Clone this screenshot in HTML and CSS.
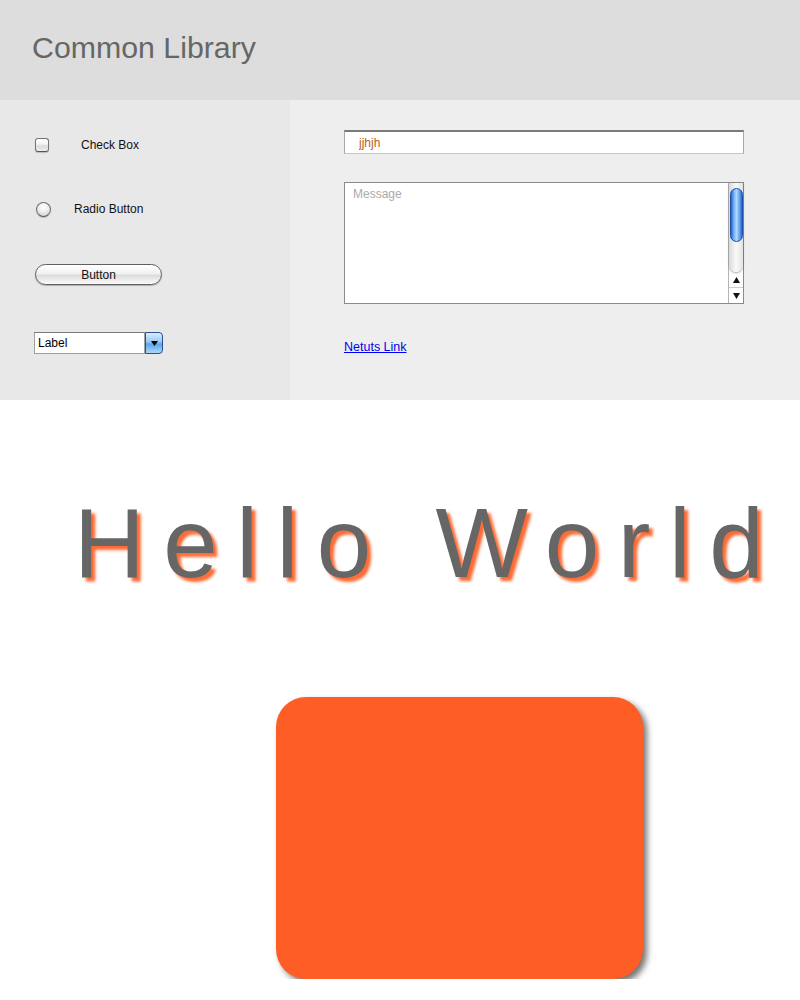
FILE: index.html
```html
<!DOCTYPE html>
<html lang="en">
<head>
<meta charset="utf-8">
<title>Common Library</title>
<link rel="stylesheet" href="styles.css">
</head>
<body>
<header class="header">
  <h1 class="title">Common Library</h1>
</header>
<section class="controls">
  <div class="col-left">
    <div class="row row-check"><span class="checkbox"></span><span class="lbl">Check Box</span></div>
    <div class="row row-radio"><span class="radio"></span><span class="lbl">Radio Button</span></div>
    <div class="row row-button"><button class="pill" type="button">Button</button></div>
    <div class="row row-select">
      <div class="select">
        <span class="select-field">Label</span>
        <span class="select-btn"><svg width="7" height="5" viewBox="0 0 7 5"><path d="M0 0H7L3.5 5Z" fill="#000"/></svg></span>
      </div>
    </div>
  </div>
  <div class="col-right">
    <input class="text-input" type="text" value="jjhjh">
    <div class="textarea-box">
      <textarea class="ta" placeholder="Message"></textarea>
      <div class="scrollbar">
        <div class="track"><div class="thumb"></div></div>
        <div class="arrow"><svg width="7" height="6" viewBox="0 0 7 6"><path d="M3.5 0L7 6H0Z" fill="#111"/></svg></div>
        <div class="arrow arrow-down"><svg width="7" height="6" viewBox="0 0 7 6"><path d="M0 0H7L3.5 6Z" fill="#111"/></svg></div>
      </div>
    </div>
    <a class="link" href="#">Netuts Link</a>
  </div>
</section>
<section class="hello">
  <p class="hello-text">Hello World</p>
</section>
<section class="box-wrap">
  <div class="orange-box"></div>
</section>
</body>
</html>
```
FILE: styles.css
```css
body {
  margin: 0;
  font-family: "Liberation Sans", Arial, sans-serif;
  background: #fff;
}

.header {
  height: 100px;
  box-sizing: border-box;
  background: #dddddd;
  padding: 31px 0 0 32px;
}

.title {
  margin: 0;
  font-weight: normal;
  font-size: 30.3px;
  line-height: 34px;
  color: #666;
}

.controls {
  display: flex;
  height: 300px;
}

.col-left {
  width: 290px;
  box-sizing: border-box;
  background: #e8e8e8;
  padding: 35px 0 0 34px;
  display: flex;
  flex-direction: column;
  align-items: flex-start;
}

.col-right {
  flex: 1;
  box-sizing: border-box;
  background: #eeeeee;
  padding: 30px 0 0 54px;
  display: flex;
  flex-direction: column;
  align-items: flex-start;
}

.row {
  display: flex;
  align-items: center;
  height: 20px;
}

.row-check { gap: 32px; padding-left: 1px; }
.row-radio { margin-top: 44px; gap: 23px; padding-left: 2px; }
.row-button { margin-top: 45px; height: 21px; padding-left: 1px; }
.row-select { margin-top: 47px; height: 22px; }

.lbl {
  font-size: 12px;
  line-height: 14px;
  color: #111;
}

.checkbox {
  width: 14px;
  height: 14px;
  box-sizing: border-box;
  border: 1px solid #757575;
  border-bottom-color: #555;
  border-radius: 3px;
  background: linear-gradient(#ffffff, #f4f4f4 40%, #dcdcdc 60%, #eeeeee);
  box-shadow: 0 1px 1px rgba(0, 0, 0, 0.2);
}

.radio {
  width: 15px;
  height: 15px;
  box-sizing: border-box;
  border: 1px solid #707070;
  border-bottom-color: #555;
  border-radius: 50%;
  background: radial-gradient(circle at 50% 30%, #ffffff 0%, #f0f0f0 40%, #c8c8c8 100%);
  box-shadow: 0 1px 1px rgba(0, 0, 0, 0.2);
}

.pill {
  width: 127px;
  height: 21px;
  box-sizing: border-box;
  border: 1px solid #5f5f5f;
  border-radius: 11px;
  padding: 0;
  background: linear-gradient(#ffffff 0%, #f1f1f1 45%, #dddddd 55%, #fafafa 100%);
  box-shadow: 0 1px 1px rgba(0, 0, 0, 0.25);
  font: 12px "Liberation Sans", Arial, sans-serif;
  color: #111;
}

.select {
  display: flex;
  width: 129px;
  height: 22px;
}

.select-field {
  width: 111px;
  box-sizing: border-box;
  border: 1px solid #a0a0a0;
  border-top-color: #7a7a7a;
  background: #fff;
  font-size: 12px;
  line-height: 20px;
  padding-left: 3px;
  color: #000;
}

.select-btn {
  width: 18px;
  box-sizing: border-box;
  border: 1px solid #2f4e8a;
  border-radius: 0 4px 4px 0;
  background: linear-gradient(#d9eeff, #94c8f6 45%, #5ba3ea 55%, #a9d8ff);
  display: flex;
  align-items: center;
  justify-content: center;
}

.text-input {
  width: 400px;
  height: 24px;
  box-sizing: border-box;
  margin: 0;
  border: 1px solid #c8c8c8;
  border-top: 2px solid #7a7a7a;
  border-left-color: #a8a8a8;
  border-right-color: #a8a8a8;
  background: #fff;
  padding: 0 0 0 14px;
  font: 12px "Liberation Sans", Arial, sans-serif;
  color: #b8601a;
  outline: none;
}

.textarea-box {
  margin-top: 28px;
  width: 400px;
  height: 122px;
  box-sizing: border-box;
  border: 1px solid #8a8a8a;
  background: #fff;
  display: flex;
}

.ta {
  flex: 1;
  margin: 0;
  border: 0;
  resize: none;
  padding: 4px 8px;
  font: 12px/14px "Liberation Sans", Arial, sans-serif;
  outline: none;
  background: transparent;
  overflow: hidden;
}

.ta::placeholder {
  color: #aaa;
}

.scrollbar {
  width: 15px;
  box-sizing: border-box;
  border-left: 1px solid #b5b5b5;
  display: flex;
  flex-direction: column;
  background: #fff;
}

.track {
  flex: 1;
  border-radius: 0 0 7px 7px;
  background: linear-gradient(90deg, #d8d8d8, #fafafa 50%, #e2e2e2);
  box-shadow: 0 1px 2px rgba(0, 0, 0, 0.35);
  padding-top: 5px;
  display: flex;
  justify-content: center;
  align-items: flex-start;
}

.thumb {
  width: 13px;
  height: 54px;
  box-sizing: border-box;
  border: 1px solid #1b4fa8;
  border-radius: 7px;
  background: linear-gradient(90deg, #2a62c8, #7db8ff 30%, #b0d8ff 50%, #5b9ef0 80%, #2a62c8);
}

.arrow {
  height: 15px;
  display: flex;
  align-items: center;
  justify-content: center;
}

.arrow-down {
  border-top: 1px solid #cfcfcf;
}

.link {
  margin-top: 36px;
  font-size: 12.5px;
  line-height: 14px;
  color: #0000ee;
  text-decoration: underline;
}

.hello {
  padding: 88px 0 0 74px;
}

.hello-text {
  margin: 0;
  font-size: 98px;
  line-height: 110px;
  letter-spacing: 18.5px;
  color: #666;
  text-shadow: 4px 4px 3px #ff6a33;
  white-space: nowrap;
}

.box-wrap {
  padding: 99px 0 0 276px;
}

.orange-box {
  width: 367px;
  height: 282px;
  border-radius: 30px;
  background: #ff5d26;
  box-shadow: 4px 4px 6px rgba(0, 0, 0, 0.55);
}
```
